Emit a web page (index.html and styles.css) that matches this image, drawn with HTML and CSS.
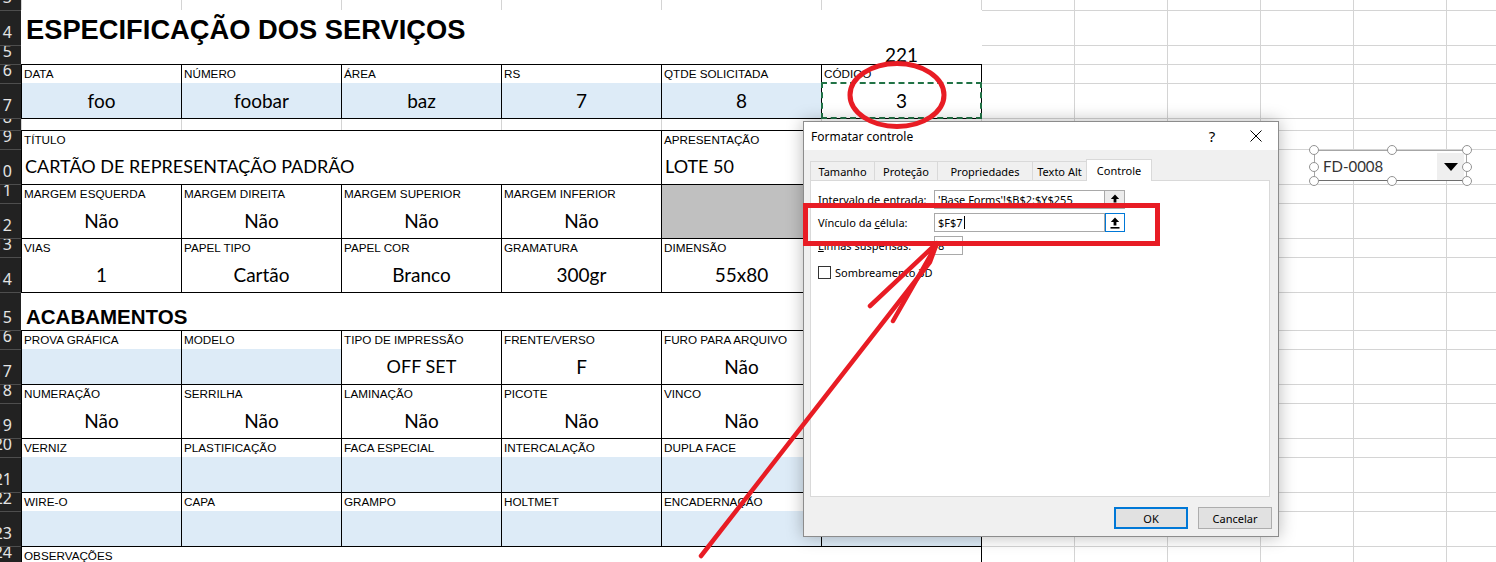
FILE: index.html
```html
<!DOCTYPE html>
<html lang="pt">
<head>
<meta charset="utf-8">
<title>Especificação dos serviços</title>
<link rel="stylesheet" href="styles.css">
</head>
<body>
<div class="sheet">
  <div class="rowhdr">
    <div class="rh h10 notop">3</div>
    <div class="rh h35">4</div>
    <div class="rh h19">5</div>
    <div class="rh h19">6</div>
    <div class="rh h35">7</div>
    <div class="rh h12">8</div>
    <div class="rh h19">9</div>
    <div class="rh h35">10</div>
    <div class="rh h19">11</div>
    <div class="rh h35">12</div>
    <div class="rh h19">13</div>
    <div class="rh h35">14</div>
    <div class="rh h38">15</div>
    <div class="rh h19">16</div>
    <div class="rh h35">17</div>
    <div class="rh h19">18</div>
    <div class="rh h35">19</div>
    <div class="rh h19">20</div>
    <div class="rh h35">21</div>
    <div class="rh h19">22</div>
    <div class="rh h35">23</div>
    <div class="rh h19">24</div>
  </div>

  <div class="main">
    <div class="strip h10"><span></span><span></span><span></span><span></span><span></span><span></span></div>
    <div class="title">ESPECIFICAÇÃO DOS SERVIÇOS</div>
    <div class="row5"><span class="c221">221</span></div>

    <div class="tbl">
      <div class="f"><div class="lb">DATA</div><div class="v bl">foo</div></div>
      <div class="f"><div class="lb">NÚMERO</div><div class="v bl">foobar</div></div>
      <div class="f"><div class="lb">ÁREA</div><div class="v bl">baz</div></div>
      <div class="f"><div class="lb">RS</div><div class="v bl">7</div></div>
      <div class="f"><div class="lb">QTDE SOLICITADA</div><div class="v bl">8</div></div>
      <div class="f"><div class="lb">CÓDIGO</div><div class="v copy">3</div></div>
    </div>

    <div class="strip h11"><span></span><span></span><span></span><span></span><span></span><span></span></div>

    <div class="tbl">
      <div class="f sp4"><div class="lb">TÍTULO</div><div class="v l caps">CARTÃO DE REPRESENTAÇÃO PADRÃO</div></div>
      <div class="f"><div class="lb">APRESENTAÇÃO</div><div class="v l caps">LOTE 50</div></div>
      <div class="f"><div class="lb"></div><div class="v"></div></div>

      <div class="f"><div class="lb">MARGEM ESQUERDA</div><div class="v">Não</div></div>
      <div class="f"><div class="lb">MARGEM DIREITA</div><div class="v">Não</div></div>
      <div class="f"><div class="lb">MARGEM SUPERIOR</div><div class="v">Não</div></div>
      <div class="f"><div class="lb">MARGEM INFERIOR</div><div class="v">Não</div></div>
      <div class="f gray"></div>
      <div class="f"><div class="lb"></div><div class="v"></div></div>

      <div class="f"><div class="lb">VIAS</div><div class="v">1</div></div>
      <div class="f"><div class="lb">PAPEL TIPO</div><div class="v">Cartão</div></div>
      <div class="f"><div class="lb">PAPEL COR</div><div class="v">Branco</div></div>
      <div class="f"><div class="lb">GRAMATURA</div><div class="v">300gr</div></div>
      <div class="f"><div class="lb">DIMENSÃO</div><div class="v">55x80</div></div>
      <div class="f"><div class="lb"></div><div class="v"></div></div>
    </div>

    <div class="heading">ACABAMENTOS</div>

    <div class="tbl">
      <div class="f"><div class="lb">PROVA GRÁFICA</div><div class="v bl"></div></div>
      <div class="f"><div class="lb">MODELO</div><div class="v bl"></div></div>
      <div class="f"><div class="lb">TIPO DE IMPRESSÃO</div><div class="v caps">OFF SET</div></div>
      <div class="f"><div class="lb">FRENTE/VERSO</div><div class="v">F</div></div>
      <div class="f"><div class="lb">FURO PARA ARQUIVO</div><div class="v">Não</div></div>
      <div class="f"><div class="lb"></div><div class="v"></div></div>

      <div class="f"><div class="lb">NUMERAÇÃO</div><div class="v">Não</div></div>
      <div class="f"><div class="lb">SERRILHA</div><div class="v">Não</div></div>
      <div class="f"><div class="lb">LAMINAÇÃO</div><div class="v">Não</div></div>
      <div class="f"><div class="lb">PICOTE</div><div class="v">Não</div></div>
      <div class="f"><div class="lb">VINCO</div><div class="v">Não</div></div>
      <div class="f"><div class="lb"></div><div class="v"></div></div>

      <div class="f"><div class="lb">VERNIZ</div><div class="v bl"></div></div>
      <div class="f"><div class="lb">PLASTIFICAÇÃO</div><div class="v bl"></div></div>
      <div class="f"><div class="lb">FACA ESPECIAL</div><div class="v bl"></div></div>
      <div class="f"><div class="lb">INTERCALAÇÃO</div><div class="v bl"></div></div>
      <div class="f"><div class="lb">DUPLA FACE</div><div class="v bl"></div></div>
      <div class="f"><div class="lb"></div><div class="v bl"></div></div>

      <div class="f"><div class="lb">WIRE-O</div><div class="v bl"></div></div>
      <div class="f"><div class="lb">CAPA</div><div class="v bl"></div></div>
      <div class="f"><div class="lb">GRAMPO</div><div class="v bl"></div></div>
      <div class="f"><div class="lb">HOLTMET</div><div class="v bl"></div></div>
      <div class="f"><div class="lb">ENCADERNAÇÃO</div><div class="v bl"></div></div>
      <div class="f"><div class="lb"></div><div class="v bl"></div></div>

      <div class="f full"><div class="lb">OBSERVAÇÕES</div></div>
    </div>
  </div>

  <div class="rgrid">
    <div class="rs h10 notop"></div>
    <div class="rs h35"></div>
    <div class="rs h19"></div>
    <div class="rs h19"></div>
    <div class="rs h35"></div>
    <div class="rs h12"></div>
    <div class="rs h19"></div>
    <div class="rs h35"></div>
    <div class="rs h19"></div>
    <div class="rs h35"></div>
    <div class="rs h19"></div>
    <div class="rs h35"></div>
    <div class="rs h38"></div>
    <div class="rs h19"></div>
    <div class="rs h35"></div>
    <div class="rs h19"></div>
    <div class="rs h35"></div>
    <div class="rs h19"></div>
    <div class="rs h35"></div>
    <div class="rs h19"></div>
    <div class="rs h35"></div>
    <div class="rs h19"></div>
  </div>
</div>

<div class="combo">
  <span class="ctext">FD-0008</span>
  <span class="cbtn"><svg width="14" height="8" viewBox="0 0 14 8"><path d="M0 0H14L7 8Z" fill="#000"/></svg></span>
  <span class="hd hd-tl"></span><span class="hd hd-tc"></span><span class="hd hd-tr"></span>
  <span class="hd hd-ml"></span><span class="hd hd-mr"></span>
  <span class="hd hd-bl"></span><span class="hd hd-bc"></span><span class="hd hd-br"></span>
</div>

<div class="dlg">
  <div class="dtitle">
    <span>Formatar controle</span>
    <span class="q">?</span>
    <svg class="xbtn" width="12" height="12" viewBox="0 0 12 12"><path d="M0.5 0.5L11.5 11.5M11.5 0.5L0.5 11.5" stroke="#000" stroke-width="1"/></svg>
  </div>
  <div class="tabs">
    <div class="tab t1">Tamanho</div>
    <div class="tab t2">Proteção</div>
    <div class="tab t3">Propriedades</div>
    <div class="tab t4">Texto Alt</div>
    <div class="tab t5 sel">Controle</div>
  </div>
  <div class="panel">
    <div class="frow">
      <span class="flabel">Intervalo de entrada:</span>
      <div class="inp">'Base Forms'!$B$2:$Y$255</div>
      <div class="ub"><svg width="10" height="12" viewBox="0 0 10 12"><path d="M5 0.5L0.8 5H3.6V8.5H6.4V5H9.2Z" fill="#000"/><rect x="0.5" y="10" width="9" height="1.6" fill="#000"/></svg></div>
    </div>
    <div class="frow">
      <span class="flabel">Vínculo da <u>c</u>élula:</span>
      <div class="inp">$F$7<span class="caret"></span></div>
      <div class="ub foc"><svg width="10" height="12" viewBox="0 0 10 12"><path d="M5 0.5L0.8 5H3.6V8.5H6.4V5H9.2Z" fill="#000"/><rect x="0.5" y="10" width="9" height="1.6" fill="#000"/></svg></div>
    </div>
    <div class="frow">
      <span class="flabel"><u>L</u>inhas suspensas:</span>
      <div class="inp small">8</div>
    </div>
    <div class="chk"><span class="cbox"></span><span>Sombreamento 3D</span></div>
  </div>
  <div class="dfoot">
    <button class="btn ok">OK</button>
    <button class="btn">Cancelar</button>
  </div>
</div>

<svg class="ink" width="1496" height="562" viewBox="0 0 1496 562">
  <ellipse cx="897" cy="95" rx="47" ry="31.5" fill="none" stroke="#e81c24" stroke-width="5"/>
  <rect x="805.5" y="205.5" width="352" height="38" fill="none" stroke="#e81c24" stroke-width="5"/>
  <path d="M701 556L930 262L937 243" fill="none" stroke="#e81c24" stroke-width="4.5" stroke-linecap="round" stroke-linejoin="round"/>
  <path d="M870 306L936 244M893 321L937 244" fill="none" stroke="#e81c24" stroke-width="4.5" stroke-linecap="round"/>
</svg>
</body>
</html>
```

FILE: styles.css
```css
html, body {
  margin: 0;
  padding: 0;
}
body {
  width: 1496px;
  height: 562px;
  overflow: hidden;
  position: relative;
  background: #fff;
  font-family: "Liberation Sans", Arial, sans-serif;
  color: #000;
}

.sheet {
  display: flex;
  height: 562px;
  overflow: hidden;
}

/* row heights */
.h10 { height: 10px; }
.h11 { height: 11px; }
.h12 { height: 12px; }
.h19 { height: 19px; }
.h35 { height: 35px; }
.h38 { height: 38px; }

/* row header */
.rowhdr {
  width: 21px;
  flex: none;
  background: #222;
  display: flex;
  flex-direction: column;
}
.rh {
  flex: none;
  box-sizing: border-box;
  border-top: 1px solid #4e4e4e;
  overflow: hidden;
  display: flex;
  align-items: flex-end;
  justify-content: flex-end;
  padding: 0 9px 5px 0;
  font: 16px/16px "Noto Sans", sans-serif;
  color: #e4e4e4;
  white-space: nowrap;
}
.rh.notop, .rs.notop { border-top: none; }

/* main area */
.main {
  width: 961px;
  flex: none;
  display: flex;
  flex-direction: column;
}
.strip {
  flex: none;
  display: flex;
  box-sizing: border-box;
  border-right: 1px solid #d4d4d4;
}
.strip span {
  width: 160px;
  box-sizing: border-box;
  border-left: 1px solid #d4d4d4;
}
.title {
  flex: none;
  height: 35px;
  box-sizing: border-box;
  padding: 4px 0 0 5px;
  font: bold 27.3px/32px "Liberation Sans", Arial, sans-serif;
  white-space: nowrap;
}
.row5 {
  flex: none;
  height: 19px;
  display: flex;
  justify-content: flex-end;
}
.c221 {
  width: 161px;
  text-align: center;
  font: 19px/19px Lato, sans-serif;
}
.heading {
  flex: none;
  height: 37px;
  box-sizing: border-box;
  padding: 12px 0 0 5px;
  font: bold 20.5px/24px "Liberation Sans", Arial, sans-serif;
  white-space: nowrap;
}

.tbl {
  flex: none;
  display: grid;
  grid-template-columns: repeat(6, 160px);
  border-right: 1px solid #000;
  border-bottom: 1px solid #000;
}
.f {
  box-sizing: border-box;
  height: 54px;
  min-width: 0;
  border-left: 1px solid #000;
  border-top: 1px solid #000;
  display: flex;
  flex-direction: column;
}
.sp4 { grid-column: span 4; }
.full { grid-column: 1 / -1; height: 60px; }
.gray { background: #c0c0c0; }
.lb {
  flex: none;
  height: 18px;
  padding-left: 2px;
  font: 11.7px/18px "Liberation Sans", Arial, sans-serif;
  white-space: nowrap;
  overflow: hidden;
}
.v {
  flex: none;
  height: 35px;
  font: 19px/35px Lato, sans-serif;
  text-align: center;
  white-space: nowrap;
}
.v.caps { font-size: 18px; }
.v.l { text-align: left; padding-left: 3px; }
.bl { background: #ddebf7; }
.copy {
  outline: 2px dashed #217346;
  outline-offset: -1px;
}

/* right grid */
.rgrid {
  flex: 1;
  display: flex;
  flex-direction: column;
}
.rs {
  flex: none;
  box-sizing: border-box;
  border-top: 1px solid #d4d4d4;
  background: repeating-linear-gradient(to right, transparent 0 92px, #d4d4d4 92px 93px);
}

/* combo box form control */
.combo {
  position: absolute;
  left: 1314px;
  top: 150px;
  width: 153px;
  height: 31px;
  box-sizing: border-box;
  border: 1px solid #a6a6a6;
  border-bottom-color: #6e6e6e;
  background: #fff;
  display: flex;
  align-items: center;
}
.ctext {
  flex: 1;
  padding-left: 8px;
  font: 15px Lato, sans-serif;
  color: #333;
}
.cbtn {
  width: 27px;
  height: 27px;
  margin: 2px 2px 0 0;
  background: #efefef;
  display: flex;
  align-items: center;
  justify-content: center;
}
.hd {
  position: absolute;
  width: 10px;
  height: 10px;
  box-sizing: border-box;
  border: 1.5px solid #939393;
  border-radius: 50%;
  background: #fff;
}
.hd-tl { left: -6px; top: -6px; }
.hd-tc { left: 72px; top: -6px; }
.hd-tr { left: 147px; top: -6px; }
.hd-ml { left: -6px; top: 11px; }
.hd-mr { left: 147px; top: 11px; }
.hd-bl { left: -6px; top: 25px; }
.hd-bc { left: 72px; top: 25px; }
.hd-br { left: 147px; top: 25px; }

/* dialog */
.dlg {
  position: absolute;
  left: 803px;
  top: 121px;
  width: 476px;
  height: 416px;
  box-sizing: border-box;
  border: 1px solid #8c8c8c;
  background: #f0f0f0;
  box-shadow: 0 0 16px rgba(0, 0, 0, 0.28);
  display: flex;
  flex-direction: column;
  font: 11px "Noto Sans", sans-serif;
  color: #000;
}
.dtitle {
  flex: none;
  height: 28px;
  background: #fff;
  display: flex;
  align-items: center;
  padding-left: 7px;
  font-size: 12px;
}
.q {
  margin-left: auto;
  width: 14px;
  text-align: center;
  font-size: 15px;
}
.xbtn { margin: 0 16px 0 31px; }

.tabs {
  flex: none;
  height: 21px;
  margin: 9px 0 0 6px;
  display: flex;
  align-items: flex-end;
}
.tab {
  height: 19px;
  box-sizing: border-box;
  border: 1px solid #d9d9d9;
  border-bottom: none;
  margin-right: -1px;
  display: flex;
  align-items: center;
  justify-content: center;
  background: #f0f0f0;
  white-space: nowrap;
}
.t1 { width: 65px; }
.t2 { width: 64px; }
.t3 { width: 96px; }
.t4 { width: 55px; }
.t5 { width: 66px; }
.tab.sel {
  height: 22px;
  margin-bottom: -1px;
  background: #fff;
  position: relative;
  z-index: 1;
}
.panel {
  flex: none;
  width: 460px;
  height: 317px;
  margin-left: 6px;
  box-sizing: border-box;
  border: 1px solid #d9d9d9;
  background: #fff;
  padding: 9px 0 0 7px;
}
.frow {
  display: flex;
  align-items: center;
  height: 19px;
  margin-bottom: 4px;
}
.flabel {
  width: 116px;
  flex: none;
  white-space: nowrap;
}
.inp {
  width: 171px;
  height: 19px;
  box-sizing: border-box;
  border: 1px solid #a9a9a9;
  padding-left: 3px;
  line-height: 17px;
  white-space: nowrap;
  overflow: hidden;
  background: #fff;
  display: flex;
  align-items: center;
}
.inp.small { width: 29px; }
.caret {
  display: inline-block;
  width: 1px;
  height: 13px;
  background: #000;
  margin-left: 1px;
}
.ub {
  width: 20px;
  height: 19px;
  box-sizing: border-box;
  border: 1px solid #a9a9a9;
  border-left: none;
  background: #ececec;
  display: flex;
  align-items: center;
  justify-content: center;
}
.ub.foc {
  border: 1px solid #0078d7;
  background: #fff;
}
.chk {
  display: flex;
  align-items: center;
  gap: 4px;
  margin-top: 10px;
}
.cbox {
  width: 13px;
  height: 13px;
  box-sizing: border-box;
  border: 1px solid #333;
  background: #fff;
}
.dfoot {
  flex: 1;
  display: flex;
  justify-content: flex-end;
  align-items: flex-start;
  gap: 10px;
  padding: 10px 6px 0 0;
}
.btn {
  width: 74px;
  height: 22px;
  box-sizing: border-box;
  border: 1px solid #adadad;
  background: #e1e1e1;
  font: 11px "Noto Sans", sans-serif;
  color: #000;
  padding: 0;
}
.btn.ok { border: 2px solid #0078d7; }

.ink {
  position: absolute;
  left: 0;
  top: 0;
  pointer-events: none;
}
```
